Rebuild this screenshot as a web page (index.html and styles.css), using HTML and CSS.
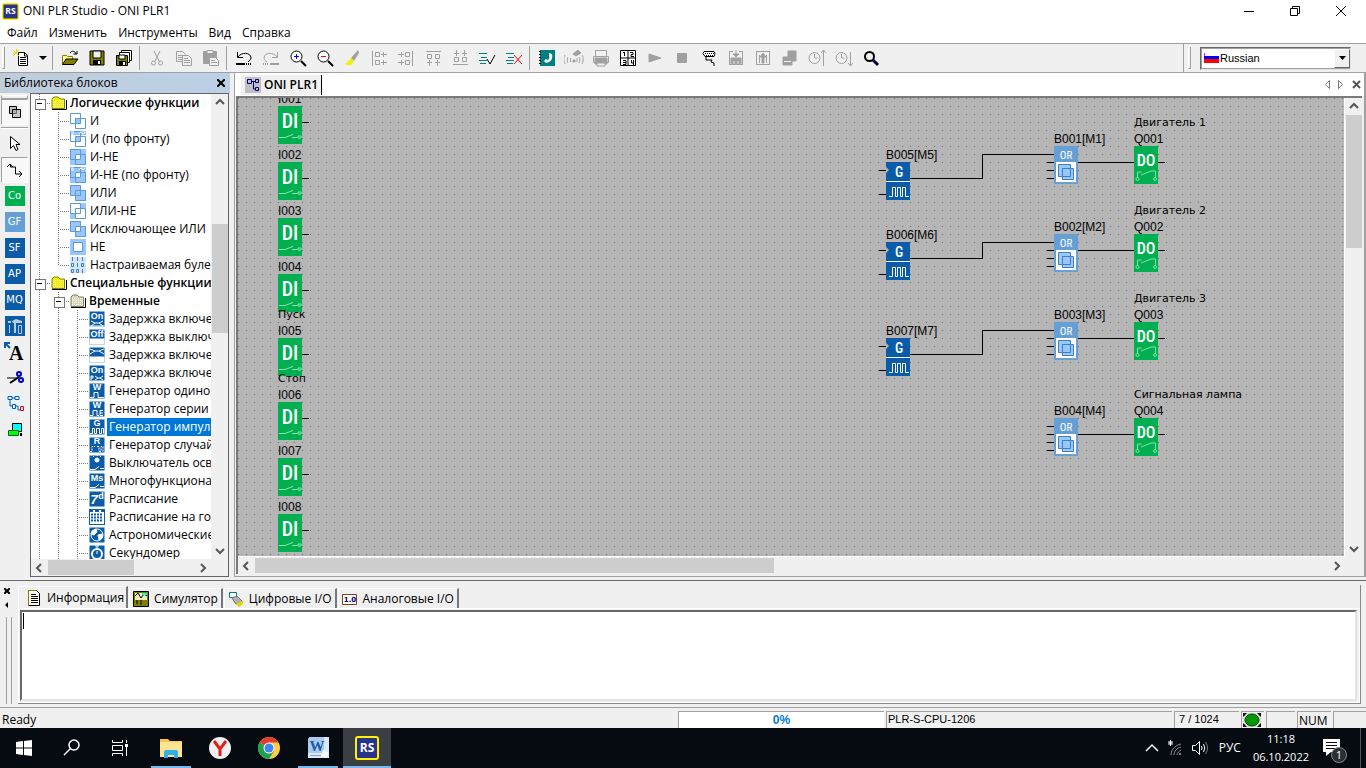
FILE: index.html
```html
<!DOCTYPE html>
<html lang="ru">
<head>
<meta charset="utf-8">
<title>ONI PLR Studio - ONI PLR1</title>
<link rel="stylesheet" href="styles.css">
</head>
<body>
<svg class="defs" aria-hidden="true">
  <defs>
    <symbol id="folder" viewBox="0 0 16 16"><path d="M1 13.500V4l2-2h4l2 2h4.500v9.500z" fill="#f4f000" stroke="#808000"/><path d="M2 5.500h11M2 7.500h11M2 9.500h11M2 11.500h11" stroke="#fff" stroke-dasharray="1 1"/><path d="M1 14.500h14.500V5" fill="none" stroke="#000"/></symbol>
    <symbol id="folder-g" viewBox="0 0 16 16"><path d="M1 13.500V4l2-2h4l2 2h4.500v9.500z" fill="#d8d8b8" stroke="#808060"/><path d="M2 5.500h11M2 7.500h11M2 9.500h11M2 11.500h11" stroke="#fff" stroke-dasharray="1 1"/><path d="M1 14.500h14.500V5" fill="none" stroke="#000"/></symbol>
    <symbol id="sq" viewBox="0 0 16 16"><path d="M.5.5h10v10H.5zM5.500 5.500h10v10h-10z" fill="none" stroke="#5b9bd5"/></symbol>
    <symbol id="l-and" viewBox="0 0 16 16"><path d="M5 5h6v6H5z" fill="#99c6ff"/><use href="#sq"/></symbol>
    <symbol id="l-andf" viewBox="0 0 16 16"><path d="M0 0h16v4H0z" fill="#99c6ff"/><path d="M5 5h6v6H5z" fill="#99c6ff"/><use href="#sq"/><path d="M1 1h3M1 3h3M9 3l2-2 2 2 2-2" stroke="#fff" fill="none"/></symbol>
    <symbol id="l-nand" viewBox="0 0 16 16"><path d="M0 0h16v16H0z" fill="#99c6ff"/><path d="M5 5h6v6H5z" fill="#fff"/><use href="#sq"/></symbol>
    <symbol id="l-nandf" viewBox="0 0 16 16"><use href="#l-nand"/><path d="M1 1h3M1 3h3M9 3l2-2 2 2 2-2" stroke="#fff" fill="none"/></symbol>
    <symbol id="l-or" viewBox="0 0 16 16"><path d="M0 0h11v5h5v11H5v-5H0z" fill="#99c6ff"/><use href="#sq"/></symbol>
    <symbol id="l-nor" viewBox="0 0 16 16"><path d="M11 0h5v5h-5zM0 11h5v5H0z" fill="#99c6ff"/><use href="#sq"/></symbol>
    <symbol id="l-xor" viewBox="0 0 16 16"><use href="#l-or"/><path d="M6 6h4v4H6z" fill="#fff"/></symbol>
    <symbol id="l-not" viewBox="0 0 16 16"><path d="M0 0h16v16H0z" fill="#99c6ff"/><path d="M3.500 3.500h9v9h-9z" fill="#fff" stroke="#5b9bd5"/></symbol>
    <symbol id="l-bool" viewBox="0 0 16 16"><path d="M0 0h16v16H0z" fill="#d4e6fa"/><path d="M2.500 0v4M7.500 0v4M12.500 0v4M1.500 6.500h2v3h-2zM7.500 6v4M11.500 6.500h2v3h-2zM1.500 12.500h2v3h-2zM6.500 12.500h2v3h-2zM12.500 12v4" stroke="#3f7fb8" fill="none"/></symbol>
    <symbol id="blue" viewBox="0 0 16 16"><path d="M0 0h16v16H0z" fill="#0b5ca8"/></symbol>

    <symbol id="di" viewBox="0 0 24 38"><path d="M0 0h24v38H0z" fill="#00b050"/><text x="12" y="22" text-anchor="middle" class="port-in">DI</text><path d="M1 31.500h6l8-3M14 31.500h6M20 30h3v2h-3z" stroke="#8be0ae" fill="none"/></symbol>
    <symbol id="do" viewBox="0 0 24 38"><path d="M0 0h24v38H0z" fill="#00b050"/><text x="12" y="20" text-anchor="middle" class="port-out">DO</text><path d="M3.500 32v-6h4M7 29l10-4h4.500v7" stroke="#8be0ae" fill="none"/><circle cx="3.500" cy="33" r="1.500" fill="none" stroke="#8be0ae"/><circle cx="21" cy="33" r="1.500" fill="none" stroke="#8be0ae"/></symbol>
    <symbol id="or" viewBox="-8 0 32 38"><path d="M-7 16.500h7M-7 24.500h7M-7 32.500h7" stroke="#000"/><path d="M0 0h24v38H0z" fill="#659fd5"/><text x="12" y="13" text-anchor="middle" class="gate-name">OR</text><path d="M2 16h20v20H2z" fill="#fff"/><path d="M4.500 18.500h12v12h-12z" fill="#99c6ff" stroke="#3f80bf"/><path d="M8.500 22.500h11v11h-11z" fill="#99c6ff" stroke="#3f80bf"/><path d="M8.500 22.500h8v8h-8z" fill="none" stroke="#3f80bf"/></symbol>
    <symbol id="gen" viewBox="-8 0 32 38"><path d="M-7 8.500h7M-7 32.500h7" stroke="#000"/><path d="M0 0h24v38H0z" fill="#0b5ca8"/><path d="M0 19.500h24" stroke="#fff"/><path d="M0 5l3 3-3 3z" fill="#b5b5b5"/><text x="13" y="15" text-anchor="middle" class="gen-name">G</text><path d="M3 34.500h3.500v-9h3v9h2v-9h3v9h2v-9h3v9H23" stroke="#fff" fill="none"/></symbol>
    <pattern id="dots" width="8" height="8" patternUnits="userSpaceOnUse"><rect width="8" height="8" fill="#b5b5b5"/><rect width="1" height="1" fill="#6c6c6c"/></pattern>
    <symbol id="up" viewBox="0 0 16 16"><path d="M4 10l4-4 4 4" fill="none" stroke="#555" stroke-width="2"/></symbol>
    <symbol id="down" viewBox="0 0 16 16"><path d="M4 6l4 4 4-4" fill="none" stroke="#555" stroke-width="2"/></symbol>
    <symbol id="left" viewBox="0 0 16 16"><path d="M10 4L6 8l4 4" fill="none" stroke="#555" stroke-width="2"/></symbol>
    <symbol id="right" viewBox="0 0 16 16"><path d="M6 4l4 4-4 4" fill="none" stroke="#555" stroke-width="2"/></symbol>
    <symbol id="rs" viewBox="0 0 24 24"><rect x="1" y="1" width="22" height="22" rx="2" fill="#26348b" stroke="#fff200" stroke-width="2"/><text x="12" y="16" text-anchor="middle" class="rs-name">RS</text></symbol>
  </defs>
</svg>

<header class="titlebar">
  <svg class="app-icon" viewBox="0 0 24 24"><use href="#rs"/></svg>
  <h1 class="title">ONI PLR Studio - ONI PLR1</h1>
  <div class="win-buttons">
    <button aria-label="Свернуть"><svg width="12" height="12"><path d="M1 6.500h10" stroke="#000"/></svg></button>
    <button aria-label="Развернуть"><svg width="12" height="12"><path d="M1.500 3.500h7v7h-7zM3.500 3V1.500h7v7H9" fill="none" stroke="#000"/></svg></button>
    <button aria-label="Закрыть"><svg width="12" height="12"><path d="M1 1l10 10M11 1L1 11" stroke="#000"/></svg></button>
  </div>
</header>
<nav class="menubar">
  <button>Файл</button><button>Изменить</button><button>Инструменты</button><button>Вид</button><button>Справка</button>
</nav>

<div class="toolbar">
  <span class="grip-v"></span>
  <div class="group group-new">
    <button class="tool" aria-label="Новый"><svg class="ic" viewBox="0 0 18 18"><path d="M5.500 3.500h6l3 3v10h-9z" fill="#fff" stroke="#000"/><path d="M7 8.500h6M7 10.500h6M7 12.500h6M7 14.500h6M11.500 3v4h3" stroke="#000" fill="none"/><path d="M0 1l6 6M6 1L0 7M3.500 0v3M0 4h3" stroke="#e0d800"/></svg></button>
    <button class="caret" aria-label="Шаблоны"><svg width="8" height="8"><path d="M0 2h8L4 6z" fill="#000"/></svg></button>
  </div>
  <span class="sep"></span>
  <div class="group">
    <button class="tool" aria-label="Открыть"><svg class="ic" viewBox="0 0 18 18"><path d="M1.500 15V6.500h4l1 1h5V10" fill="#ffff9a" stroke="#808000"/><path d="M1.500 15.500L5 10h12l-4 5.500z" fill="#808000" stroke="#000"/><path d="M9 4c2-3 5-2 6 1M12.500 5H16V2" fill="none" stroke="#000"/></svg></button>
    <button class="tool" aria-label="Сохранить"><svg class="ic" viewBox="0 0 18 18"><path d="M2 2h14v14H2z" fill="#808000" stroke="#000"/><path d="M5 2h8v7H5z" fill="#f0f0f0" stroke="#000"/><path d="M5 11h8v5H5z" fill="#000"/><path d="M10 12h2v3h-2z" fill="#fff"/></svg></button>
    <button class="tool" aria-label="Сохранить все"><svg class="ic" viewBox="0 0 18 18"><path d="M6.500 1.500h10v10h-10z" fill="#fff" stroke="#000"/><path d="M4.500 3.500h10v10h-10z" fill="#fff" stroke="#000"/><path d="M1.500 6.500h11v10h-11z" fill="#808000" stroke="#000"/><path d="M4 6h6v4H4z" fill="#fff" stroke="#000"/><path d="M4 12h7v4H4z" fill="#000"/><path d="M8 13h2v3H8z" fill="#fff"/></svg></button>
  </div>
  <span class="sep"></span>
  <div class="group off">
    <button class="tool" aria-label="Вырезать" disabled><svg class="ic" viewBox="0 0 18 18"><path d="M6 2l5 10M12 2L7 12"/><circle cx="5.500" cy="14" r="2"/><circle cx="12.500" cy="14" r="2"/></svg></button>
    <button class="tool" aria-label="Копировать" disabled><svg class="ic" viewBox="0 0 18 18"><path d="M1.500 2.500h6l3 3v7h-9zM3 6.500h5M3 8.500h5M3 10.500h4"/><path d="M7.500 6.500h6l3 3v7h-9z" fill="#f0f0f0"/><path d="M9 9.500h4M9 11.500h6M9 13.500h6"/></svg></button>
    <button class="tool" aria-label="Вставить" disabled><svg class="ic" viewBox="0 0 18 18"><path d="M1.500 2.500h13v12h-13z" fill="#a0a0a0"/><path d="M5 1.500h6v3H5z" fill="#f0f0f0"/><path d="M7.500 8.500h6l3 3v5h-9z" fill="#f0f0f0"/><path d="M9 11.500h4M9 13.500h6"/></svg></button>
  </div>
  <span class="sep"></span>
  <div class="group">
    <button class="tool" aria-label="Отменить"><svg class="ic" viewBox="0 0 18 18"><path d="M2.500 3v5.500H8M3 8c3-5 13-5 13 1 0 2-2 3-3 4" fill="none" stroke="#000"/><path d="M1 15h9" stroke="#000" stroke-width="2"/><path d="M11 15h6" stroke="#000" stroke-width="2" stroke-dasharray="1 1"/></svg></button>
    <button class="tool" aria-label="Вернуть" disabled><svg class="ic" viewBox="0 0 18 18"><path d="M15.500 3v5.500H10M15 8C12 3 2 3 2 9c0 2 2 3 3 4" fill="none" stroke="#a0a0a0"/><path d="M8 15h9" stroke="#a0a0a0" stroke-width="2"/><path d="M1 15h6" stroke="#a0a0a0" stroke-width="2" stroke-dasharray="1 1"/></svg></button>
    <button class="tool" aria-label="Увеличить"><svg class="ic" viewBox="0 0 18 18"><circle cx="7.500" cy="7.500" r="5.500" fill="#fff" stroke="#000"/><path d="M12 12l5 5" stroke="#000" stroke-width="2"/><path d="M5 7.500h5M7.500 5v5" stroke="#00f"/></svg></button>
    <button class="tool" aria-label="Уменьшить"><svg class="ic" viewBox="0 0 18 18"><circle cx="7.500" cy="7.500" r="5.500" fill="#fff" stroke="#000"/><path d="M12 12l5 5" stroke="#000" stroke-width="2"/><path d="M5 7.500h5" stroke="#f00"/></svg></button>
    <button class="tool" aria-label="Формат"><svg class="ic" viewBox="0 0 18 18"><path d="M15 1l-7 8 3 3 5-8z" fill="#a0a0a0"/><path d="M8 9l-6 7h6l3-4z" fill="#f4f000"/></svg></button>
    <button class="tool" aria-label="По левому краю" disabled><svg class="ic g" viewBox="0 0 18 18"><path d="M2.500 2v15M5.500 3.500h4v4h-4zM5.500 11.500h4v4h-4zM11 5.500h6M11 13.500h6M13.500 3v5M13.500 11v5"/></svg></button>
    <button class="tool" aria-label="По правому краю" disabled><svg class="ic g" viewBox="0 0 18 18"><path d="M15.500 2v15M8.500 3.500h4v4h-4zM8.500 11.500h4v4h-4zM1 5.500h6M1 13.500h6M4.500 3v5M4.500 11v5"/></svg></button>
    <button class="tool" aria-label="По верхнему краю" disabled><svg class="ic g" viewBox="0 0 18 18"><path d="M2 2.500h15M3.500 5.500h4v4h-4zM11.500 5.500h4v4h-4zM5.500 11v6M13.500 11v6M3 13.500h5M11 13.500h5"/></svg></button>
    <button class="tool" aria-label="По нижнему краю" disabled><svg class="ic g" viewBox="0 0 18 18"><path d="M2 15.500h15M3.500 8.500h4v4h-4zM11.500 8.500h4v4h-4zM5.500 1v6M13.500 1v6M3 4.500h5M11 4.500h5"/></svg></button>
    <button class="tool" aria-label="Проверить"><svg class="ic" viewBox="0 0 18 18"><path d="M1 4.500h8M3 8.500h6M1 11.500h8M2 14.500h6" stroke="#008080"/><path d="M9 10l3 5 5-9" fill="none" stroke="#000"/></svg></button>
    <button class="tool" aria-label="Отменить проверку"><svg class="ic" viewBox="0 0 18 18"><path d="M1 4.500h8M3 8.500h6M1 11.500h8M2 14.500h6" stroke="#008080"/><path d="M9 6l8 9M17 6l-8 9" fill="none" stroke="#f00"/></svg></button>
  </div>
  <span class="sep"></span>
  <div class="group">
    <button class="tool" aria-label="Телефонная книга"><svg class="ic" viewBox="0 0 18 18"><path d="M2 1h15v16H2z" fill="#008080"/><path d="M1 2.500h2M1 5.500h2M1 8.500h2M1 11.500h2M1 14.500h2" stroke="#000"/><path d="M11 4l3 1c1 5-1 8-6 9l-2-2 2-2 2 1c1-1 2-3 1-4z" fill="#fff"/></svg></button>
    <button class="tool" aria-label="Связь" disabled><svg class="ic wide g" viewBox="0 0 20 18"><path d="M1 6c-2 3-1 7 0 9M4 8c-1 2-1 4 0 6M15 8c1 2 1 4 0 6M18 6c2 3 1 7 0 9M6.500 9v4M13 9v4"/><path d="M9 5l5-4 3 3-5 3zM9 11h2v2H9z" fill="#a0a0a0"/></svg></button>
    <button class="tool" aria-label="Печать" disabled><svg class="ic g" viewBox="0 0 18 18"><path d="M3.500 1.500h11v6h-11zM1.500 7.500h15v6h-15z"/><path d="M3 9h12v6H3z" fill="#a0a0a0"/><path d="M5 14h8v3H5z" fill="#f0f0f0"/></svg></button>
    <button class="tool" aria-label="Сетка"><svg class="ic" viewBox="0 0 18 18"><path d="M1.500 1.500h15v15h-15zM9 1v16M1 9h16M5.500 3v4M4 3.500h1M11 3.500h3v2h-2v2h3M4 11.500h3v4H4M4 13.500h3M12.500 11v3h2M14.500 11v5" fill="#fff" stroke="#000"/></svg></button>
    <button class="tool" aria-label="Пуск" disabled><svg class="ic g" viewBox="0 0 18 18"><path d="M3 5l12 4-12 4z" fill="#a0a0a0"/></svg></button>
    <button class="tool" aria-label="Стоп" disabled><svg class="ic g" viewBox="0 0 18 18"><path d="M4.500 4.500h9v9h-9z" fill="#a0a0a0"/></svg></button>
    <button class="tool" aria-label="Порт"><svg class="ic" viewBox="0 0 18 18"><path d="M4 2.500h10l1 2-1 3H5l-2-3z" fill="#fff" stroke="#000"/><path d="M5 4.500h9M6 6.500h7" stroke="#000" stroke-dasharray="1 1"/><path d="M6 8v3h6l-1 2 3 1v3" fill="none" stroke="#000"/></svg></button>
    <button class="tool" aria-label="Записать" disabled><svg class="ic g" viewBox="0 0 18 18"><path d="M2 2.500h4M12 2.500h4M2.500 2v14M15.500 2v14M2 15.500h14"/><path d="M4 9h10v6H4zM9 1v5M6 5h6l-3 3z" fill="#a0a0a0"/><path d="M7 12v3M11 12v3" stroke="#f0f0f0"/></svg></button>
    <button class="tool" aria-label="Считать" disabled><svg class="ic g" viewBox="0 0 18 18"><path d="M2 2.500h14M2.500 2v14M15.500 2v14M2 15.500h14M5.500 6v8M12.500 6v8"/><path d="M6 8h6L9 4zM8 8h2v6H8z" fill="#a0a0a0"/></svg></button>
    <button class="tool" aria-label="Сравнить" disabled><svg class="ic g" viewBox="0 0 18 18"><path d="M7 2h8v10H7zM2 8h9v8H2z" fill="#a0a0a0"/><path d="M3 12.500h7" stroke="#f0f0f0"/></svg></button>
    <button class="tool" aria-label="Время вверх" disabled><svg class="ic g" viewBox="0 0 18 18"><circle cx="6.500" cy="9" r="5.500"/><path d="M6.500 5v4h3M15.500 17V1M13 4l2.500-3L18 4"/></svg></button>
    <button class="tool" aria-label="Время вниз" disabled><svg class="ic g" viewBox="0 0 18 18"><circle cx="6.500" cy="9" r="5.500"/><path d="M6.500 5v4h3M15.500 3v14M13 14l2.500 3 2.500-3"/></svg></button>
    <button class="tool" aria-label="Найти"><svg class="ic" viewBox="0 0 18 18"><circle cx="7.500" cy="7.500" r="4.500" fill="#f0f0f0" stroke="#000" stroke-width="2"/><path d="M11 11l5 5" stroke="#000040" stroke-width="3"/></svg></button>
  </div>
  <div class="lang-bar">
    <span class="grip-v"></span>
    <label class="lang"><svg class="flag" width="15" height="10"><path d="M0 0h15v4H0z" fill="#fff"/><path d="M0 3h15v3H0z" fill="#00f"/><path d="M0 6h15v4H0z" fill="#f00"/><path d="M.5 0v3" stroke="#f0f"/></svg>
      <select class="lang-select" aria-label="Язык"><option>Russian</option></select>
      <span class="drop"><svg width="7" height="4"><path d="M0 0h7L3.500 4z" fill="#000"/></svg></span></label>
  </div>
</div>

<main class="work">
  <aside class="library">
    <h2 class="library-head"><span>Библиотека блоков</span><button aria-label="Закрыть панель"><svg width="8" height="8"><path d="M0 0l8 8M8 0L0 8" stroke="#000" stroke-width="2"/></svg></button></h2>
    <div class="library-body">
      <div class="side">
        <span class="grip-h"></span>
        <button class="side-btn pressed" aria-label="Блоки"><svg width="14" height="14"><path d="M1.500 1.500h7v7h-7z" fill="#c0c0c0" stroke="#000"/><path d="M4.500 4.500h8v8h-8z" fill="#a8a8a8" fill-opacity=".6" stroke="#000"/></svg></button>
        <span class="side-sep"></span>
        <button class="side-btn" aria-label="Выбор"><svg width="12" height="18"><path d="M1.500 1.500v12l3-3 2.500 5 2-1-2-5h4z" fill="#fff" stroke="#000"/></svg></button>
        <button class="side-btn pressed" aria-label="Соединение"><svg width="18" height="16"><path d="M1 5l3-3 3 3M4.500 2v3h5v7H16M13 9l3 3-3 3" fill="none" stroke="#000"/></svg></button>
        <button class="side-btn"><span class="chip chip-co">Co</span></button>
        <button class="side-btn"><span class="chip chip-gf">GF</span></button>
        <button class="side-btn"><span class="chip">SF</span></button>
        <button class="side-btn"><span class="chip">AP</span></button>
        <button class="side-btn"><span class="chip">MQ</span></button>
        <button class="side-btn" aria-label="Макросы"><span class="chip"><svg width="16" height="16"><path d="M1 3h3v2H1zM7 4h2v11H7z" fill="#b8cde0"/><path d="M5 3l4-2 6 2v2H6z" fill="#b8cde0"/><path d="M11.500 7.500h3v8h-3zM2.500 7v8" fill="none" stroke="#b8cde0"/></svg></span></button>
        <button class="side-btn" aria-label="Текст"><svg width="22" height="20"><path d="M1 6V1h5M1 1l5 5" stroke="#0b5ca8" stroke-width="2" fill="none"/><text x="5" y="18" class="letter">A</text></svg></button>
        <button class="side-btn" aria-label="Разрезать"><svg width="18" height="14"><path d="M1 7h11" stroke="#000"/><path d="M4 12l9-6" stroke="#000" stroke-width="2"/><circle cx="13" cy="3" r="2" fill="none" stroke="#00c" stroke-width="2"/><circle cx="15" cy="9" r="2" fill="none" stroke="#00c" stroke-width="2"/></svg></button>
        <button class="side-btn" aria-label="Связи"><svg width="20" height="20"><path d="M0 0h20v20H0z" fill="#e8f2fc"/><path d="M3 2.500h4v3H3zM10 2.500h4v3h-4zM7 4h3M5 6v6h3M7.500 10.500h3v4h-3zM10 12h3v4h2" fill="none" stroke="#0b5ca8"/><path d="M15.500 12.500h3v4h-3z" fill="none" stroke="#f00"/></svg></button>
        <button class="side-btn" aria-label="Симуляция"><svg width="16" height="16"><path d="M5.500 1.500h9v8h-9z" fill="#0ff" stroke="#000"/><path d="M13 11h2v3h-2z" fill="#000"/><path d="M1.500 8.500h10v5h-10z" fill="#0f0" stroke="#063"/></svg></button>
      </div>
      <div class="tree-box">
        <div class="tree-main">
          <ul class="tree">
            <li><i class="box"></i><svg class="ti"><use href="#folder"/></svg><b>Логические функции</b></li>
            <li><i class="v"></i><i class="t"></i><svg class="ti"><use href="#l-and"/></svg><span>И</span></li>
            <li><i class="v"></i><i class="t"></i><svg class="ti"><use href="#l-andf"/></svg><span>И (по фронту)</span></li>
            <li><i class="v"></i><i class="t"></i><svg class="ti"><use href="#l-nand"/></svg><span>И-НЕ</span></li>
            <li><i class="v"></i><i class="t"></i><svg class="ti"><use href="#l-nandf"/></svg><span>И-НЕ (по фронту)</span></li>
            <li><i class="v"></i><i class="t"></i><svg class="ti"><use href="#l-or"/></svg><span>ИЛИ</span></li>
            <li><i class="v"></i><i class="t"></i><svg class="ti"><use href="#l-nor"/></svg><span>ИЛИ-НЕ</span></li>
            <li><i class="v"></i><i class="t"></i><svg class="ti"><use href="#l-xor"/></svg><span>Исключающее ИЛИ</span></li>
            <li><i class="v"></i><i class="t"></i><svg class="ti"><use href="#l-not"/></svg><span>НЕ</span></li>
            <li><i class="v"></i><i class="t end"></i><svg class="ti"><use href="#l-bool"/></svg><span>Настраиваемая булева</span></li>
            <li><i class="box"></i><svg class="ti"><use href="#folder"/></svg><b>Специальные функции</b></li>
            <li><i class="v"></i><i class="box"></i><svg class="ti"><use href="#folder-g"/></svg><b>Временные</b></li>
            <li><i class="v"></i><i class="v"></i><i class="t"></i><svg class="ti fn" viewBox="0 0 16 16"><use href="#blue"/><text x="8" y="8">On</text><path d="M2 10l4 2h4l4-2M2 15l4-3M14 15l-4-3M1 15h14"/></svg><span>Задержка включения</span></li>
            <li><i class="v"></i><i class="v"></i><i class="t"></i><svg class="ti fn" viewBox="0 0 16 16"><use href="#blue"/><text x="8" y="8">Off</text><path d="M1 10h14v5H1z" fill="#fff"/></svg><span>Задержка выключения</span></li>
            <li><i class="v"></i><i class="v"></i><i class="t"></i><svg class="ti fn" viewBox="0 0 16 16"><use href="#blue"/><path d="M1 2l5 2h4l5-2M1 7l5-3M15 7l-5-3"/><path d="M1 10h14v5H1z" fill="#fff"/></svg><span>Задержка включения</span></li>
            <li><i class="v"></i><i class="v"></i><i class="t"></i><svg class="ti fn" viewBox="0 0 16 16"><use href="#blue"/><text x="8" y="8">On</text><path d="M2 15v-4h2v2H2M6 11l3 2h2l3-2M6 15l3-2M14 15l-3-2"/></svg><span>Задержка включения</span></li>
            <li><i class="v"></i><i class="v"></i><i class="t"></i><svg class="ti fn" viewBox="0 0 16 16"><use href="#blue"/><text x="8" y="7">W</text><path d="M1 14.500h4v-5h4v5h6"/></svg><span>Генератор одиночного</span></li>
            <li><i class="v"></i><i class="v"></i><i class="t"></i><svg class="ti fn" viewBox="0 0 16 16"><use href="#blue"/><text x="8" y="7">W</text><path d="M1 14.500h3v-5h4v5h2M14 9.500h-3v5h3M11 12h3"/></svg><span>Генератор серии импульсов</span></li>
            <li><i class="v"></i><i class="v"></i><i class="t"></i><svg class="ti fn" viewBox="0 0 16 16"><use href="#blue"/><text x="8" y="7">G</text><path d="M1 14.500h2.500v-5h2v5h2v-5h3v5h2v-5h2v5"/></svg><span class="picked">Генератор импульсов</span></li>
            <li><i class="v"></i><i class="v"></i><i class="t"></i><svg class="ti fn" viewBox="0 0 16 16"><use href="#blue"/><text x="8" y="7">R</text><path d="M1 14.500h2v-5h3M8 9.500h2v5M10 14.500h2v-5h2v5" stroke-dasharray="2 1"/></svg><span>Генератор случайных</span></li>
            <li><i class="v"></i><i class="v"></i><i class="t"></i><svg class="ti fn" viewBox="0 0 16 16"><use href="#blue"/><circle cx="8" cy="5" r="2" fill="#fff"/><path d="M4 1l1 1M12 1l-1 1M8 0v1M1 14.500h5l4-3M11 13.500h4"/></svg><span>Выключатель освещения</span></li>
            <li><i class="v"></i><i class="v"></i><i class="t"></i><svg class="ti fn" viewBox="0 0 16 16"><use href="#blue"/><text x="8" y="8">Ms</text><path d="M1 14.500h5l4-3M11 13.500h4"/></svg><span>Многофункциональный</span></li>
            <li><i class="v"></i><i class="v"></i><i class="t"></i><svg class="ti fn" viewBox="0 0 16 16"><use href="#blue"/><text x="5" y="13" class="seven">7</text><text x="12" y="8">d</text></svg><span>Расписание</span></li>
            <li><i class="v"></i><i class="v"></i><i class="t"></i><svg class="ti" viewBox="0 0 16 16"><use href="#blue"/><path d="M1 3h14v12H1zM4 1h2v3H4zM10 1h2v3h-2z" fill="#fff"/><path d="M2 5.500h12M2 8.500h12M2 11.500h12" stroke="#0b5ca8" stroke-width="2" stroke-dasharray="2 1"/></svg><span>Расписание на год</span></li>
            <li><i class="v"></i><i class="v"></i><i class="t"></i><svg class="ti fn" viewBox="0 0 16 16"><use href="#blue"/><circle cx="8" cy="8" r="6"/><path d="M3 4l4-2 1 3-3 3-3-1zM9 8l4-1v4l-3 2z" fill="#fff"/></svg><span>Астрономические</span></li>
            <li><i class="v"></i><i class="v"></i><i class="t"></i><svg class="ti fn" viewBox="0 0 16 16"><use href="#blue"/><circle cx="8" cy="9" r="5" stroke-width="2"/><path d="M6 1h4M8 1v3M8 9V6"/></svg><span>Секундомер</span></li>
          </ul>
          <div class="vscroll"><svg class="arr"><use href="#up"/></svg><div class="track tree-track"><div class="thumb"></div></div><svg class="arr"><use href="#down"/></svg></div>
        </div>
        <div class="hscroll"><svg class="arr"><use href="#left"/></svg><div class="track tree-htrack"><div class="thumb"></div></div><svg class="arr"><use href="#right"/></svg></div>
      </div>
    </div>
  </aside>

  <section class="editor">
    <div class="tabstrip">
      <button class="doc-tab"><svg width="16" height="16"><path d="M0 0h16v16H0z" fill="#c0c0c0"/><path d="M2.500 2.500h4v4h-4zM10.500 2.500h3v3h-3zM10.500 10.500h3v3h-3zM7 4.500h3M8.500 4v8H10" fill="none" stroke="#000080"/></svg>ONI PLR1</button>
      <div class="tab-nav">
        <button aria-label="Назад"><svg width="6" height="9"><path d="M5.500.5v8l-4-4z" fill="none" stroke="#777"/></svg></button>
        <button aria-label="Вперед"><svg width="6" height="9"><path d="M.5.5v8l4-4z" fill="none" stroke="#777"/></svg></button>
        <button aria-label="Закрыть"><svg width="9" height="9"><path d="M1 1l7 7M8 1L1 8" stroke="#555" stroke-width="2"/></svg></button>
      </div>
    </div>
    <div class="canvas-frame">
      <div class="canvas-row">
        <svg class="canvas" role="img" aria-label="Схема">
          <rect width="100%" height="100%" fill="url(#dots)"/>
          <g transform="translate(-238 -98)">
            <g stroke="#000" fill="none">
              <path d="M302 122.500h7M302 178.500h7M302 234.500h7M302 290.500h7M302 354.500h7M302 418.500h7M302 474.500h7M302 530.500h7"/>
              <path d="M910 178.500h72.500v-24H1054M910 258.500h72.500v-16H1054M910 354.500h72.500v-24H1054M1047 426.500h7"/>
              <path d="M1078 162.500h87M1078 250.500h87M1078 338.500h87M1078 434.500h87"/>
            </g>
            <g>
              <use href="#di" x="278" y="106" width="24" height="38"/><use href="#di" x="278" y="162" width="24" height="38"/>
              <use href="#di" x="278" y="218" width="24" height="38"/><use href="#di" x="278" y="274" width="24" height="38"/>
              <use href="#di" x="278" y="338" width="24" height="38"/><use href="#di" x="278" y="402" width="24" height="38"/>
              <use href="#di" x="278" y="458" width="24" height="38"/><use href="#di" x="278" y="514" width="24" height="38"/>
              <use href="#gen" x="878" y="162" width="32" height="38"/><use href="#gen" x="878" y="242" width="32" height="38"/><use href="#gen" x="878" y="338" width="32" height="38"/>
              <use href="#or" x="1046" y="146" width="32" height="38"/><use href="#or" x="1046" y="234" width="32" height="38"/><use href="#or" x="1046" y="322" width="32" height="38"/><use href="#or" x="1046" y="418" width="32" height="38"/>
              <use href="#do" x="1134" y="146" width="24" height="38"/><use href="#do" x="1134" y="234" width="24" height="38"/><use href="#do" x="1134" y="322" width="24" height="38"/><use href="#do" x="1134" y="418" width="24" height="38"/>
            </g>
            <g class="labels">
              <text x="278" y="103">I001</text><text x="278" y="159">I002</text><text x="278" y="215">I003</text><text x="278" y="271">I004</text>
              <text x="278" y="318" class="note">Пуск</text><text x="278" y="335">I005</text><text x="278" y="382" class="note">Стоп</text><text x="278" y="399">I006</text><text x="278" y="455">I007</text><text x="278" y="511">I008</text>
              <text x="886" y="159">B005[M5]</text><text x="886" y="239">B006[M6]</text><text x="886" y="335">B007[M7]</text>
              <text x="1054" y="143">B001[M1]</text><text x="1054" y="231">B002[M2]</text><text x="1054" y="319">B003[M3]</text><text x="1054" y="415">B004[M4]</text>
              <text x="1134" y="143">Q001</text><text x="1134" y="231">Q002</text><text x="1134" y="319">Q003</text><text x="1134" y="415">Q004</text>
              <text x="1134" y="126" class="note">Двигатель 1</text><text x="1134" y="214" class="note">Двигатель 2</text><text x="1134" y="302" class="note">Двигатель 3</text><text x="1134" y="398" class="note">Сигнальная лампа</text>
            </g>
          </g>
        </svg>
        <div class="vscroll"><svg class="arr"><use href="#up"/></svg><div class="track canvas-track"><div class="thumb"></div></div><svg class="arr"><use href="#down"/></svg></div>
      </div>
      <div class="hscroll"><svg class="arr"><use href="#left"/></svg><div class="track canvas-htrack"><div class="thumb"></div></div><svg class="arr"><use href="#right"/></svg></div>
    </div>
  </section>
</main>

<section class="dock">
  <div class="dock-side">
    <button aria-label="Закрыть"><svg width="6" height="6"><path d="M0 0l6 6M6 0L0 6" stroke="#000" stroke-width="2"/></svg></button>
    <button aria-label="Свернуть"><svg width="6" height="6"><path d="M4 0v6L1 3z" fill="#000"/></svg></button>
    <span class="dock-grip"></span>
  </div>
  <div class="dock-main">
    <div class="dock-tabs">
      <button class="dock-tab current"><svg width="16" height="16"><path d="M2.500.5h8l3 3v12h-11z" fill="#fff" stroke="#000"/><path d="M2.500 16V.5h8" fill="none" stroke="#808000"/><path d="M5 4.500h5M5 6.500h7M5 8.500h7M5 10.500h7M5 12.500h7" stroke="#000"/></svg>Информация</button>
      <button class="dock-tab"><svg width="16" height="16"><path d="M.5.5h15v15H.5z" fill="#808000" stroke="#000"/><path d="M2 2h12v7H2z" fill="#e8f0c0"/><path d="M2 5l3-3 3 5 3-4 3 2M4 9v4M8 9v5" fill="none" stroke="#000"/><path d="M9 2h5v2H9z" fill="#0ff"/></svg>Симулятор</button>
      <button class="dock-tab"><svg width="16" height="16"><path d="M1.500 1.500h7v5h-7z" fill="#fff" stroke="#008080"/><path d="M4 7l5-2 6 6-3 4-5-3z" fill="#b0b0b0" stroke="#777"/><path d="M8 13l7-3v3l-4 3z" fill="#e0d800"/></svg>Цифровые I/O</button>
      <button class="dock-tab"><svg width="16" height="16"><path d="M.5 3.500h14v10H.5z" fill="#fff" stroke="#804020"/><text x="8" y="11" text-anchor="middle" class="tiny">1.0</text></svg>Аналоговые I/O</button>
    </div>
    <div class="dock-page"><textarea class="output" aria-label="Информация"></textarea><span class="cursor"></span></div>
  </div>
</section>

<footer class="status">
  <span class="ready">Ready</span>
  <span class="pane pane-progress">0%</span>
  <span class="pane pane-cpu">PLR-S-CPU-1206</span>
  <span class="pane pane-mem">7 / 1024</span>
  <span class="pane pane-led"><svg width="20" height="14"><path d="M1 0h18v14H1z" fill="#000"/><path d="M5 0h10l4 4v6l-4 4H5l-4-4V4z" fill="#ddd"/><ellipse cx="10" cy="7" rx="7" ry="6" fill="#009a00" stroke="#040"/></svg></span>
  <span class="pane pane-caps"></span>
  <span class="pane pane-num">NUM</span>
  <span class="pane pane-scrl"></span>
</footer>

<nav class="taskbar">
  <div class="start-group">
    <button aria-label="Пуск"><svg width="16" height="16"><path d="M0 2l7-1v6.500H0zM8 1l8-1v7.500H8zM0 8.500h7V15l-7-1zM8 8.500h8V16l-8-1z" fill="#fff"/></svg></button>
    <button aria-label="Поиск"><svg width="18" height="18"><circle cx="11" cy="6" r="5" fill="none" stroke="#fff" stroke-width="1.500"/><path d="M7.500 9.500L1 16" stroke="#fff" stroke-width="1.500"/></svg></button>
    <button aria-label="Представление задач"><svg width="18" height="16"><path d="M1.500 0v2.500h10V0M1.500 16v-2.500h10V16M1.500 5.500h10v5h-10zM15.500 0v3M15.500 7v9" fill="none" stroke="#fff"/><path d="M14 4h3v3h-3z" fill="#fff"/></svg></button>
  </div>
  <div class="app-group">
    <button class="running" aria-label="Проводник"><svg width="24" height="24"><path d="M1 3h8l2 2h12v16H1z" fill="#f5c54a"/><path d="M1 6h22v15H1z" fill="#ffe48f"/><path d="M5 22v-6q0-2 2-2h10q2 0 2 2v6h-4v-3H9v3z" fill="#2fb0ea"/></svg></button>
    <button aria-label="Яндекс"><svg width="24" height="24"><circle cx="12" cy="12" r="11" fill="#f0f0f0"/><path d="M6 5l6 8 6-8M12 13v7" stroke="#e0201a" stroke-width="3" fill="none"/></svg></button>
    <button aria-label="Chrome"><svg width="24" height="24"><circle cx="12" cy="12" r="11" fill="#ffcd42"/><path d="M12 12L2.500 6.500A11 11 0 0 1 21.500 6.500H12z" fill="#e33b2e"/><path d="M2.500 6.500A11 11 0 0 0 12 23l5-8-5-3z" fill="#1da050"/><circle cx="12" cy="12" r="5.500" fill="#fff"/><circle cx="12" cy="12" r="4.500" fill="#4285f4"/></svg></button>
    <button class="running" aria-label="Word"><svg width="24" height="24"><path d="M2 3l2-2h19v21H2z" fill="#dbe8f6"/><path d="M2 3l2-2h14v16H2z" fill="#a9cbee"/><text x="11" y="15" text-anchor="middle" class="word">W</text><path d="M4 19.500h11" stroke="#7aa7d8"/><path d="M17 14l6 3-3 5-5-2z" fill="#fff"/></svg></button>
    <button class="running active" aria-label="ONI PLR Studio"><svg width="24" height="24"><use href="#rs"/></svg></button>
  </div>
  <div class="tray">
    <svg width="14" height="10"><path d="M1 8l6-6 6 6" fill="none" stroke="#fff" stroke-width="1.500"/></svg>
    <svg width="16" height="18"><path d="M1 4h5M3.500 1v6M1.500 2l4 4M5.500 2l-4 4" stroke="#fff"/><path d="M4 16C4 10 9 6 14 5M7 16c0-4 3-7 7-8M10 16c0-2 2-4 4-5" stroke="#8a8f94" fill="none"/><circle cx="13" cy="15" r="1" fill="#aaa"/></svg>
    <svg width="18" height="14"><path d="M1.500 4.500h3l4-4v13l-4-4h-3z" fill="none" stroke="#fff"/><path d="M10.500 5q1 2 0 4M12.500 3q2.500 4 0 8" fill="none" stroke="#fff"/><path d="M14.500 1q4 6 0 12" fill="none" stroke="#777"/></svg>
    <span class="lang-code">РУС</span>
    <span class="clock"><span>11:18</span><span>06.10.2022</span></span>
    <button class="notes" aria-label="Уведомления"><svg width="26" height="26"><path d="M1 1h17v13H9l-5 4v-4H1z" fill="#fff"/><path d="M4 4.500h11M4 7.500h11M4 10.500h11" stroke="#0a0e14"/><circle cx="17" cy="17" r="7.500" fill="#2b2f33" stroke="#888"/><text x="17" y="21" text-anchor="middle" class="badge">1</text></svg></button>
    <span class="peek"></span>
  </div>
</nav>
</body>
</html>
```
FILE: styles.css
```css
* { box-sizing: border-box; }
body {
  margin: 0;
  height: 100vh;
  display: flex;
  flex-direction: column;
  overflow: hidden;
  background: #f0f0f0;
  color: #000;
  font: 12px/18px "Open Sans", "Noto Sans", sans-serif;
}
button {
  border: 0;
  padding: 0;
  background: none;
  color: inherit;
  font: inherit;
  display: flex;
  align-items: center;
  justify-content: center;
}
h1, h2 { margin: 0; font: inherit; }
.defs { position: absolute; width: 0; height: 0; }

/* title and menu */
.titlebar { height: 22px; flex: none; background: #fff; display: flex; align-items: center; padding: 0 2px; }
.app-icon { width: 17px; height: 17px; }
.title { margin-left: 4px; flex: 1; }
.win-buttons { display: flex; }
.win-buttons button { width: 46px; height: 22px; }
.menubar { height: 22px; flex: none; background: #fff; border-bottom: 1px solid #a0a0a0; display: flex; padding-left: 7px; gap: 11px; align-items: center; }

/* toolbar */
.toolbar { height: 29px; flex: none; display: flex; align-items: center; border-bottom: 1px solid #a0a0a0; }
.grip-v { width: 3px; height: 22px; margin-left: 2px; border: 1px solid #a0a0a0; border-left-color: #fff; border-top: 0; }
.group { display: flex; align-items: center; }
.group-new { margin-left: 3px; }
.tool { width: 27px; height: 26px; flex: none; }
.caret { width: 15px; height: 26px; }
.ic { width: 18px; height: 18px; }
.wide { width: 20px; }
.off .ic, .g { fill: none; stroke: #a0a0a0; }
.sep { width: 1px; height: 24px; margin: 0 3px 0 2px; background: #a0a0a0; flex: none; }
.lang-bar { margin-left: auto; height: 28px; border-left: 1px solid #a0a0a0; display: flex; align-items: center; padding: 0 15px 0 2px; gap: 9px; }
.lang { position: relative; display: flex; }
.lang-select {
  width: 151px; height: 23px; padding: 0 0 0 19px;
  border: 1px solid; border-color: #696969 #e3e3e3 #e3e3e3 #696969; outline: 1px solid #a0a0a0; outline-offset: -2px;
  background: #fff; appearance: none; border-radius: 0; color: #000;
  font: 11px/18px "Liberation Sans", Arial, sans-serif;
}
.flag { position: absolute; left: 4px; top: 6px; }
.drop { position: absolute; right: 1px; top: 2px; width: 16px; height: 19px; background: #f0f0f0; border: 1px solid; border-color: #fff #696969 #696969 #fff; display: flex; align-items: center; justify-content: center; pointer-events: none; }

/* working area */
.work { flex: 1; min-height: 0; display: flex; gap: 4px; padding-bottom: 3px; }
.library { width: 230px; flex: none; display: flex; flex-direction: column; }
.library-head { height: 20px; flex: none; display: flex; align-items: center; justify-content: space-between; padding: 0 5px 0 4px; background: linear-gradient(90deg, #bfcddb, #bcd0e6); }
.library-body { flex: 1; min-height: 0; display: flex; }
.side { width: 30px; flex: none; padding: 2px 2px 0 1px; }
.grip-h { display: block; height: 4px; border: 1px solid #a0a0a0; border-top-color: #fff; }
.side-btn { width: 27px; height: 26px; }
.pressed { background: #f8f8f8; border: 1px solid; border-color: #a0a0a0 #fff #fff #a0a0a0; }
.side-sep { display: block; height: 2px; margin: 2px 0; border-top: 1px solid #a0a0a0; border-bottom: 1px solid #fff; }
.chip { width: 20px; height: 20px; display: flex; align-items: center; justify-content: center; background: #0b5ca8; color: #fff; font: 10px/20px "DejaVu Sans", sans-serif; }
.chip-co { background: #00b050; }
.chip-gf { background: #659fd5; }
.letter { font: bold 20px "Liberation Serif", serif; }

.tree-box { flex: 1; min-width: 0; margin-right: 1px; border: 1px solid #646464; background: #fff; display: flex; flex-direction: column; }
.tree-main { flex: 1; min-height: 0; display: flex; }
.tree { flex: 1; min-width: 0; margin: 0; padding: 0; list-style: none; overflow: hidden; }
.tree li { height: 18px; display: flex; align-items: center; white-space: nowrap; }
.tree i { width: 19px; height: 18px; flex: none; position: relative; }
.v, .t, .box { background: repeating-linear-gradient(#777 0 1px, transparent 1px 2px) 8px 0 / 1px 18px no-repeat; }
.t.end { background-size: 1px 9px; }
.t::after, .box::after { content: ""; position: absolute; left: 9px; top: 9px; width: 10px; height: 1px; background: repeating-linear-gradient(90deg, transparent 0 1px, #777 1px 2px); }
.box::before { content: ""; position: absolute; z-index: 1; left: 4px; top: 5px; width: 9px; height: 9px; border: 1px solid #777; background: linear-gradient(#000, #000) 1px 3px / 5px 1px no-repeat #fff; }
.ti { width: 16px; height: 16px; flex: none; margin-left: 1px; }
.fn { fill: none; stroke: #fff; }
.fn text { font: bold 9px "Liberation Sans", sans-serif; fill: #fff; stroke: none; text-anchor: middle; }
.fn .seven { font: italic bold 13px "Liberation Sans", sans-serif; }
.tree b, .tree span { margin-left: 2px; padding: 0 2px; line-height: 18px; }
.tree b { font-weight: 600; padding: 0 0 0 1px; }
.tree .picked { background: #0078d7; color: #fff; }

.vscroll { width: 17px; flex: none; background: #f0f0f0; display: flex; flex-direction: column; align-items: center; }
.hscroll { height: 17px; flex: none; background: #f0f0f0; display: flex; align-items: center; padding-right: 17px; }
.arr { width: 16px; height: 16px; flex: none; }
.track { flex: 1; display: flex; }
.vscroll .track { width: 16px; flex-direction: column; }
.hscroll .track { height: 15px; }
.thumb { background: #cdcdcd; flex: none; }
.tree-track { padding-top: 114px; }
.tree-track .thumb { height: 109px; }
.tree-htrack { padding-left: 1px; }
.tree-htrack .thumb { width: 86px; }
.canvas-track { padding-top: 1px; }
.canvas-track .thumb { height: 133px; }
.canvas-htrack { padding-left: 1px; }
.canvas-htrack .thumb { width: 519px; }

/* editor */
.editor { flex: 1; min-width: 0; background: #f0f0f0; border: 1px solid #a0a0a0; border-width: 0 2px 1px 1px; display: flex; flex-direction: column; }
.tabstrip { height: 23px; flex: none; background: #fff; display: flex; justify-content: space-between; padding: 2px 3px 1px 6px; }
.doc-tab { height: 20px; gap: 3px; padding: 0 3px 0 4px; background: #f0f0f0; border-right: 1px solid #000; font-weight: 600; }
.tab-nav { display: flex; gap: 8px; }
.tab-nav button { height: 18px; }
.canvas-frame { flex: 1; min-height: 0; margin: 0 2px 2px 1px; border: 2px solid #7a7a7a; border-width: 2px 0 0 2px; display: flex; flex-direction: column; }
.canvas-row { flex: 1; min-height: 0; display: flex; }
.canvas { flex: 1; min-width: 0; height: 100%; border-right: 1px solid #fff; border-bottom: 1px solid #fff; }
.labels { font: 12px "Liberation Sans", Arial, sans-serif; }
.note { font: 11px "DejaVu Sans", sans-serif; }
.port-in { font: 500 20px "Roboto Condensed", Roboto, sans-serif; fill: #fff; }
.port-out { font: 500 16px "Roboto Condensed", Roboto, sans-serif; fill: #fff; }
.gate-name { font: 11px "Roboto Condensed", Roboto, sans-serif; fill: #fff; }
.gen-name { font: 500 14px "Roboto Condensed", Roboto, sans-serif; fill: #fff; }
.rs-name { font: bold 12px "Open Sans", sans-serif; fill: #fff; }

/* information dock */
.dock { height: 127px; flex: none; border-top: 1px solid #696969; display: flex; padding: 4px 5px 3px 0; }
.dock-side { width: 18px; flex: none; padding: 0 4px; display: flex; flex-direction: column; }
.dock-side button { width: 6px; height: 12px; }
.dock-side button + button { height: 16px; }
.dock-grip { flex: 1; width: 6px; margin: 4px 0 0 2px; border: 1px solid #a0a0a0; border-width: 0 1px; }
.dock-main { flex: 1; display: flex; flex-direction: column; border: 1px solid #888; border-width: 0 1px 1px 0; }
.dock-tabs { display: flex; align-items: flex-end; gap: 1px; height: 23px; flex: none; }
.dock-tab { height: 20px; gap: 5px; padding: 0 3px; border: 1px solid; border-width: 1px 2px 0 1px; border-color: #fff #777 #fff #fff; }
.dock-tab.current { height: 22px; padding: 0 2px 0 7px; }
.dock-page { flex: 1; position: relative; display: flex; border: 1px solid #fff; padding: 1px 2px 1px 1px; }
.output { flex: 1; resize: none; margin: 0; background: #fff; border: 2px solid; border-color: #696969 #e3e3e3 #e3e3e3 #696969; outline: 0; font: inherit; }
.cursor { position: absolute; left: 4px; top: 4px; width: 1px; height: 16px; background: #000; }
.tiny { font: bold 7px "DejaVu Sans", sans-serif; fill: #000080; }

/* status bar */
.status { height: 21px; flex: none; border-top: 1px solid #a0a0a0; display: flex; gap: 2px; padding-top: 3px; }
.ready { flex: 1; padding-left: 2px; }
.pane { flex: none; height: 17px; line-height: 17px; overflow: hidden; white-space: nowrap; border: 1px solid #a0a0a0; border-width: 1px 0 0 1px; }
.pane-progress { width: 206px; background: #fff; text-align: center; color: #0078d7; font: bold 12px/17px "Liberation Sans", sans-serif; }
.pane-cpu { width: 286px; padding-left: 1px; font: 11px/14px "Liberation Sans", sans-serif; }
.pane-mem { width: 65px; padding-left: 4px; font: 11px/14px "Liberation Sans", sans-serif; }
.pane-led { width: 23px; padding: 1px 0; }
.pane-caps { width: 29px; }
.pane-num { width: 34px; padding-left: 1px; }
.pane-scrl { width: 33px; }

/* taskbar */
.taskbar { height: 40px; flex: none; background: #060b12; color: #fff; display: flex; }
.start-group, .app-group { display: flex; }
.taskbar button { width: 48px; height: 40px; }
.app-group { margin-left: 3px; gap: 1px; }
.running { background: linear-gradient(#76b9ed, #76b9ed) 4px 38px / 40px 2px no-repeat; }
.app-group .active { background: linear-gradient(#76b9ed, #76b9ed) 0 38px / 48px 2px no-repeat #3b3f44; }
.tray { margin-left: auto; display: flex; align-items: center; gap: 8px; }
.lang-code { margin-left: 2px; }
.clock { display: flex; flex-direction: column; align-items: center; font-size: 11px; margin-left: 4px; }
.taskbar .notes { width: 35px; padding-top: 6px; }
.peek { height: 40px; width: 6px; border-left: 1px solid #555; }
.word { font: bold 15px "Liberation Serif", serif; fill: #1b5aa8; }
.badge { font: 11px "Open Sans", sans-serif; fill: #fff; }
```
